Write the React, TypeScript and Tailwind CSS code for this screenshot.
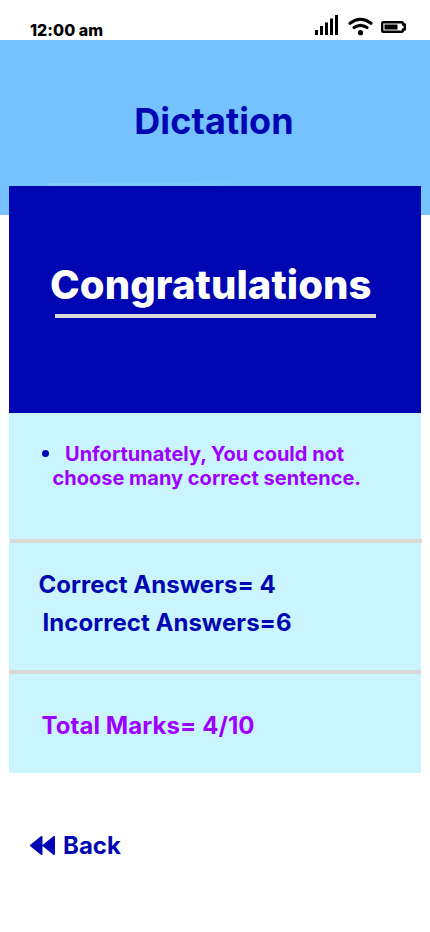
export default function App() {
  return (
    <main className="flex h-[932px] w-[430px] flex-col overflow-hidden bg-white font-['Inter',sans-serif] font-bold whitespace-nowrap text-[#0006b1]">
      <header className="flex h-10 shrink-0 justify-between pl-[30px] pr-6 text-black">
        <time className="pt-5 text-base leading-5 font-extrabold tracking-[0.05px]">12:00 am</time>
        <div className="flex pt-[15px]">
          <svg width="92" height="22" viewBox="0 0 92 22" fill="none" stroke="#000" strokeLinecap="round" strokeLinejoin="round">
            <path d="M1 15h3v5H1zM6 11h3v9H6zM11 7.5h3V20h-3zM16 3.5h3V20h-3zM21 0h3v20h-3z" fill="#000" stroke="none" />
            <path d="M36 8.3q10.5-8 21 0M40 12.6q6.5-4.5 13 0" strokeWidth="3" />
            <circle cx="46.5" cy="17.7" r="2.6" fill="#000" stroke="none" />
            <path d="M69.2 7.2h18.3q1.5 0 1.5 1.5v.8h1.8v5H89v.8q0 1.5-1.5 1.5H69.2q-1 0-1-1v-7.6q0-1 1-1Z" strokeWidth="2.4" />
            <path d="M70.5 9.5h13v5h-13z" fill="#000" stroke="none" />
          </svg>
        </div>
      </header>
      <section className="h-[175px] shrink-0 bg-[#75c2ff] pt-[59px] text-center">
        <h1 className="-ml-[2px] text-[36px] leading-[44px] tracking-[0.1px]">Dictation</h1>
        <div className="mx-auto mt-[40px] h-[3px] w-[336px] rounded-tl-[3px] bg-linear-to-r from-[#80caff] to-[#75c2ff]" />
      </section>
      <section className="relative mx-[9px] -mt-[29px] h-[227px] shrink-0 bg-[#0006b1] pt-[75px] pl-[41px]">
        <h2 className="text-[40px] leading-[48px] font-extrabold tracking-[0.09px] text-white">Congratulations</h2>
        <div className="ml-[5px] mt-[5px] h-1 w-[321px] bg-[#d9d9d9]" />
      </section>
      <section className="mx-[9px] h-[360px] shrink-0 bg-[#caf5ff]">
        <div className="h-[126px] pl-[33px] pt-[29px] text-[20px] leading-6 text-[#9d00ff]">
          <p className="flex items-center gap-4"><span className="mb-px h-[7px] w-[7px] rounded-full bg-[#0006b1]" />Unfortunately, You could not</p>
          <p className="ml-[10.5px]">choose many correct sentence.</p>
        </div>
        <div className="ml-px h-1 w-[412px] bg-[#d9d9d9]" />
        <div className="h-[127px] pl-[29.5px] pt-[23px] text-2xl leading-[38px]"><p className="tracking-[0.04px]">Correct Answers= 4</p><p className="ml-1 tracking-[0.04px]">Incorrect Answers=6</p></div>
        <div className="h-1 bg-[#d9d9d9]" />
        <p className="pl-[32.5px] pt-[37px] text-2xl leading-[30px] tracking-[0.08px] text-[#9d00ff]">Total Marks= 4/10</p>
      </section>
      <button className="mt-[58px] ml-[30px] flex items-center gap-[7px] text-2xl leading-[30px]">
        <svg width="26" height="20" viewBox="0 0 26 20" fill="currentColor" stroke="currentColor" strokeWidth="2" strokeLinejoin="round"><path d="M1 9.5 11.5 1v17zM13.5 9.5 24 1v17z" /></svg>Back
      </button>
    </main>
  )
}
